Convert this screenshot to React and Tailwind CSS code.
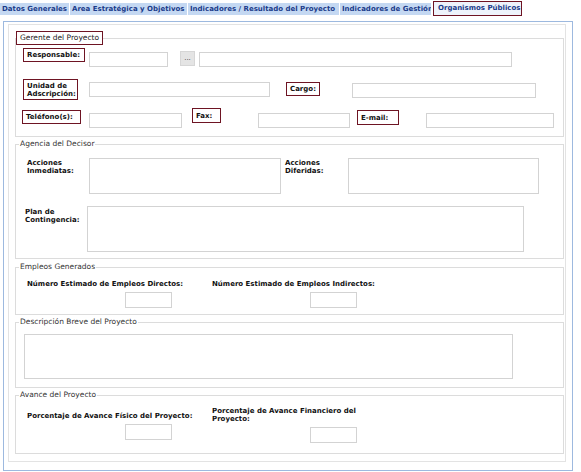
import React from 'react';

// shared styles
const FONT = "font-['DejaVu_Sans',Verdana,sans-serif]";
const LABEL = "border border-[#6e1423] px-[3px] font-bold text-[7px] leading-[8px] text-[#111] flex items-center";
const FIELD = "border border-[#d3d3d3] bg-white";
const SET = "border border-[#dcdcdc] w-[549px] min-w-0";
const LEGEND = "ml-[3px] px-[1px] text-[7.5px] leading-[10px] text-[#333]";
const TXT = "font-bold text-[7px] leading-[8px] text-[#111]";
const TAB = "h-[12px] bg-[#c4d8f2] pl-[2px] leading-[12px] font-bold text-[7px] text-[#1a3b8a] whitespace-nowrap overflow-hidden";

export default function App() {
  return (
    <div className={`w-[581px] h-[472px] bg-white overflow-hidden ${FONT}`}>
      {/* tabs */}
      <div className="flex items-start pt-[3px]">
        <div className={`${TAB} w-[69px]`}>Datos Generales</div>
        <div className={`${TAB} w-[117px] ml-[1px]`}>Area Estratégica y Objetivos</div>
        <div className={`${TAB} w-[151px] ml-[1px]`}>Indicadores / Resultado del Proyecto</div>
        <div className={`${TAB} w-[91px] ml-[1px]`}>Indicadores de Gestión</div>
        <div className="w-[89px] h-[15px] -mt-[2px] ml-[2px] border border-[#6e1423] bg-[#eef3fb] pl-[4px] leading-[13px] font-bold text-[7px] text-[#1a3b8a] whitespace-nowrap overflow-hidden">
          Organismos Públicos
        </div>
      </div>

      {/* frame */}
      <div className="ml-[3px] mt-[5px] w-[570px] h-[450px] border border-[#9db9df] pl-[4px] pt-[2px]">
        <div className="w-[558px] h-[438px] border border-[#e3e3e3] pl-[6px] pt-[6px]">
          {/* Gerente del Proyecto */}
          <fieldset className={`${SET} h-[106px]`}>
            <legend className="border border-[#6e1423] px-[3px] h-[14px] text-[7.5px] leading-[12px] text-[#222]">
              Gerente del Proyecto
            </legend>
            <div className="flex items-start mt-[3px]">
              <div className={`${LABEL} ml-[7px] w-[62px] h-[14px]`}>Responsable:</div>
              <input className={`${FIELD} ml-[4px] mt-[4px] w-[79px] h-[15px]`} />
              <div className="ml-[12px] mt-[3px] w-[15px] h-[15px] bg-[#e4e4e4] border border-[#d6d6d6] text-[7px] leading-[12px] text-center text-[#444]">...</div>
              <input className={`${FIELD} ml-[4px] mt-[4px] w-[313px] h-[15px]`} />
            </div>
            <div className="flex items-start mt-[12px]">
              <div className={`${LABEL} ml-[7px] w-[55px] h-[21px]`}>Unidad de Adscripción:</div>
              <input className={`${FIELD} ml-[11px] mt-[3px] w-[181px] h-[15px]`} />
              <div className={`${LABEL} ml-[16px] mt-[3px] w-[34px] h-[14px]`}>Cargo:</div>
              <input className={`${FIELD} ml-[32px] mt-[4px] w-[184px] h-[15px]`} />
            </div>
            <div className="flex items-start mt-[8px]">
              <div className={`${LABEL} ml-[6px] mt-[2px] w-[59px] h-[14px]`}>Teléfono(s):</div>
              <input className={`${FIELD} ml-[8px] mt-[5px] w-[93px] h-[15px]`} />
              <div className={`${LABEL} ml-[10px] w-[29px] h-[15px]`}>Fax:</div>
              <input className={`${FIELD} ml-[37px] mt-[5px] w-[92px] h-[15px]`} />
              <div className={`${LABEL} ml-[7px] mt-[2px] w-[42px] h-[15px]`}>E-mail:</div>
              <input className={`${FIELD} ml-[27px] mt-[5px] w-[128px] h-[15px]`} />
            </div>
          </fieldset>

          {/* Agencia del Decisor */}
          <fieldset className={`${SET} h-[120px] mt-[2px]`}>
            <legend className={LEGEND}>Agencia del Decisor</legend>
            <div className="flex items-start mt-[8px]">
              <div className={`${TXT} ml-[11px] mt-[2px] w-[62px]`}>Acciones<br />Inmediatas:</div>
              <textarea className={`${FIELD} resize-none mt-[1px] w-[192px] h-[36px]`} />
              <div className={`${TXT} ml-[4px] mt-[2px] w-[63px]`}>Acciones<br />Diferidas:</div>
              <textarea className={`${FIELD} resize-none mt-[1px] w-[191px] h-[36px]`} />
            </div>
            <div className="flex items-start mt-[12px]">
              <div className={`${TXT} ml-[9px] mt-[2px] w-[62px]`}>Plan de<br />Contingencia:</div>
              <textarea className={`${FIELD} resize-none w-[437px] h-[46px]`} />
            </div>
          </fieldset>

          {/* Empleos Generados */}
          <fieldset className={`${SET} h-[53px] mt-[3px]`}>
            <legend className={LEGEND}>Empleos Generados</legend>
            <div className="flex items-start mt-[8px]">
              <div className="ml-[11px] w-[185px]">
                <div className={`${TXT} whitespace-nowrap`}>Número Estimado de Empleos Directos:</div>
                <input className={`${FIELD} ml-[98px] w-[47px] h-[16px]`} />
              </div>
              <div>
                <div className={`${TXT} whitespace-nowrap`}>Número Estimado de Empleos Indirectos:</div>
                <input className={`${FIELD} ml-[98px] w-[47px] h-[16px]`} />
              </div>
            </div>
          </fieldset>

          {/* Descripción Breve del Proyecto */}
          <fieldset className={`${SET} h-[71px] mt-[2px]`}>
            <legend className={LEGEND}>Descripción Breve del Proyecto</legend>
            <textarea className={`${FIELD} resize-none block ml-[8px] mt-[7px] w-[489px] h-[45px]`} />
          </fieldset>

          {/* Avance del Proyecto */}
          <fieldset className={`${SET} h-[64px] mt-[2px]`}>
            <legend className={LEGEND}>Avance del Proyecto</legend>
            <div className="flex items-start">
              <div className="ml-[11px] mt-[12px] w-[185px]">
                <div className={`${TXT} whitespace-nowrap`}>Porcentaje de Avance Físico del Proyecto:</div>
                <input className={`${FIELD} ml-[98px] w-[47px] h-[16px]`} />
              </div>
              <div className="mt-[7px]">
                <div className={`${TXT} whitespace-nowrap`}>Porcentaje de Avance Financiero del<br />Proyecto:</div>
                <input className={`${FIELD} ml-[98px] mt-[1px] w-[47px] h-[16px]`} />
              </div>
            </div>
          </fieldset>
        </div>
      </div>
    </div>
  );
}
